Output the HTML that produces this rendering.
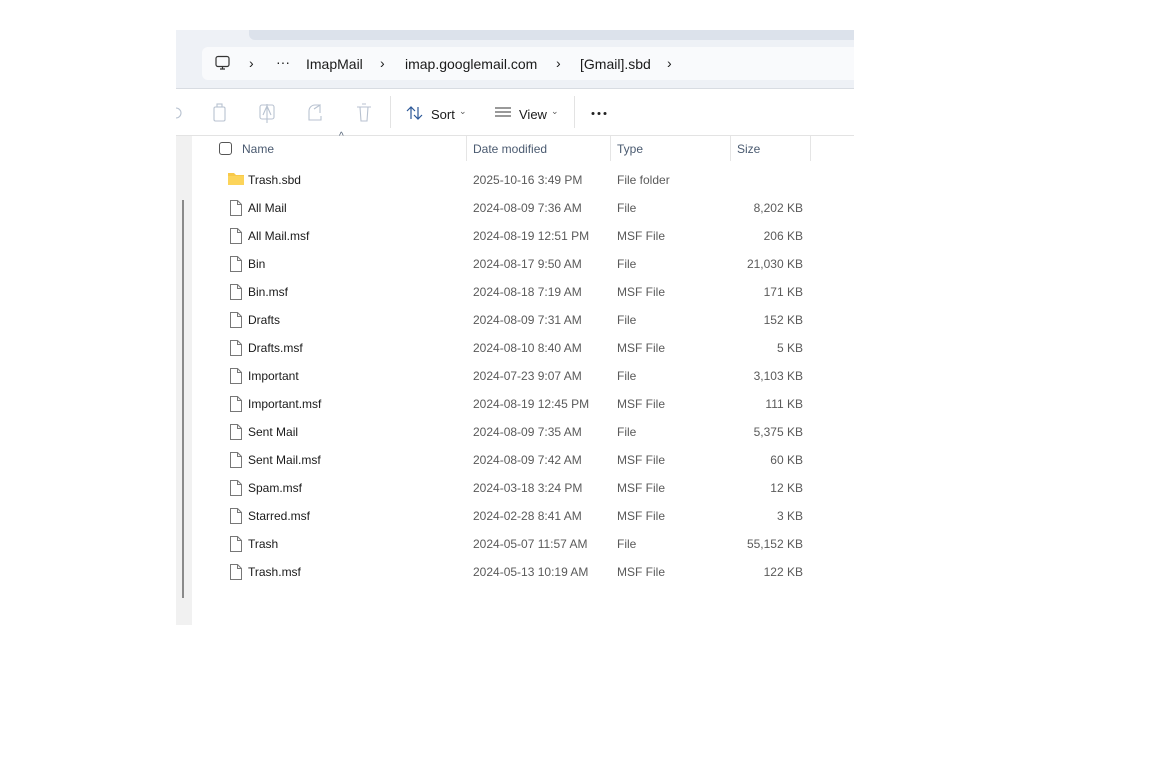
<!DOCTYPE html>
<html><head><style>
*{margin:0;padding:0;box-sizing:border-box}
body{width:1152px;height:758px;background:#fff;font-family:"Liberation Sans",sans-serif;position:relative;overflow:hidden;color:#1a1a1a}
.a{position:absolute}
.t{font-size:12px;white-space:nowrap}
.h{font-size:12px;color:#4a5a70}
.g{color:#5a5a5a}
</style></head><body>
<div class="a" style="left:176px;top:30px;width:678px;height:58px;background:#eef1f6"></div>
<div class="a" style="left:249px;top:30px;width:605px;height:10px;background:#dce2eb;border-radius:0 0 0 6px"></div>
<div class="a" style="left:202px;top:47px;width:652px;height:33px;background:#f9fafc;border-radius:6px 0 0 6px"></div>
<div class="a" style="left:176px;top:88px;width:678px;height:1px;background:#d8dce2"></div>
<div class="a" style="left:176px;top:135px;width:678px;height:1px;background:#e3e3e3"></div>
<div class="a" style="left:176px;top:136px;width:16px;height:489px;background:#f1f1f1"></div>
<div class="a" style="left:182px;top:200px;width:2px;height:398px;background:#8a8a8a"></div>
<svg class="a" style="left:214px;top:55px" width="18" height="17" viewBox="0 0 18 17"><rect x="2" y="1.5" width="13" height="10" rx="2" fill="none" stroke="#333" stroke-width="1.2"/><path d="M6 14h5M8.5 11.5v2.5" stroke="#333" stroke-width="1.2"/></svg>
<div class="a t" style="left:249px;top:55px;font-size:14px">›</div>
<div class="a t" style="left:276px;top:54px;font-size:14px">···</div>
<div class="a t" style="left:306px;top:56px;font-size:14px">ImapMail</div>
<div class="a t" style="left:380px;top:55px;font-size:14px">›</div>
<div class="a t" style="left:405px;top:56px;font-size:14px">imap.googlemail.com</div>
<div class="a t" style="left:556px;top:55px;font-size:14px">›</div>
<div class="a t" style="left:580px;top:56px;font-size:14px">[Gmail].sbd</div>
<div class="a t" style="left:667px;top:55px;font-size:14px">›</div>
<svg class="a" style="left:176px;top:100px" width="210" height="26" viewBox="0 0 210 26" fill="none" stroke="#b8c2d0" stroke-width="1.1">
<path d="M0 8a5 5 0 0 1 0 10"/>
<rect x="38" y="7" width="11" height="14" rx="1.5"/><rect x="41" y="4" width="5" height="3"/>
<rect x="84" y="5" width="14" height="14" rx="2"/><path d="M91 4v19M87 15l4-9 4 9"/>
<path d="M138 9l6-4v8M144 5h-5a6 6 0 0 0-6 6v2M133 11v9h12v-4"/>
<path d="M181 7h14M184 7l1 14h6l1-14M186 4h4"/>
</svg>
<div class="a" style="left:390px;top:96px;width:1px;height:32px;background:#e3e3e3"></div>
<div class="a" style="left:574px;top:96px;width:1px;height:32px;background:#e3e3e3"></div>
<svg class="a" style="left:406px;top:105px" width="18" height="16" viewBox="0 0 18 16" fill="none" stroke="#2b5797" stroke-width="1.2"><path d="M5 14V2M1 6l4-4 4 4M12 2v12M8 10l4 4 4-4"/></svg>
<div class="a t" style="left:431px;top:107px;font-size:13px">Sort</div>
<div class="a t g" style="left:459px;top:106px;font-size:9px">⌄</div>
<svg class="a" style="left:494px;top:106px" width="18" height="12"><path d="M1 2h16M1 6h16M1 10h16" stroke="#333" stroke-width="1.1"/></svg>
<div class="a t" style="left:519px;top:107px;font-size:13px">View</div>
<div class="a t g" style="left:551px;top:106px;font-size:9px">⌄</div>
<svg class="a" style="left:590px;top:111px" width="20" height="5"><circle cx="3" cy="2.5" r="1.5" fill="#222"/><circle cx="9" cy="2.5" r="1.5" fill="#222"/><circle cx="15" cy="2.5" r="1.5" fill="#222"/></svg>
<div class="a" style="left:219px;top:142px;width:13px;height:13px;border:1px solid #555;border-radius:3px"></div>
<div class="a h" style="left:242px;top:142px">Name</div>
<div class="a h" style="left:339px;top:131px;font-size:10px">^</div>
<div class="a" style="left:466px;top:136px;width:1px;height:25px;background:#e5e5e5"></div>
<div class="a h" style="left:473px;top:142px">Date modified</div>
<div class="a" style="left:610px;top:136px;width:1px;height:25px;background:#e5e5e5"></div>
<div class="a h" style="left:617px;top:142px">Type</div>
<div class="a" style="left:730px;top:136px;width:1px;height:25px;background:#e5e5e5"></div>
<div class="a h" style="left:737px;top:142px">Size</div>
<div class="a" style="left:810px;top:136px;width:1px;height:25px;background:#e5e5e5"></div>
<div id="rows"></div>
<svg class="a" style="left:227px;top:171px" width="18" height="15"><path d="M1 2h6l2 2h8v10H1z" fill="#f8c94a"/><path d="M1 5h16v9H1z" fill="#fcd45a"/></svg>
<div class="a t" style="left:248px;top:173px">Trash.sbd</div>
<div class="a t g" style="left:473px;top:173px">2025-10-16 3:49 PM</div>
<div class="a t g" style="left:617px;top:173px">File folder</div>
<script>
var d=[["All Mail","2024-08-09 7:36 AM","File","8,202 KB"],["All Mail.msf","2024-08-19 12:51 PM","MSF File","206 KB"],["Bin","2024-08-17 9:50 AM","File","21,030 KB"],["Bin.msf","2024-08-18 7:19 AM","MSF File","171 KB"],["Drafts","2024-08-09 7:31 AM","File","152 KB"],["Drafts.msf","2024-08-10 8:40 AM","MSF File","5 KB"],["Important","2024-07-23 9:07 AM","File","3,103 KB"],["Important.msf","2024-08-19 12:45 PM","MSF File","111 KB"],["Sent Mail","2024-08-09 7:35 AM","File","5,375 KB"],["Sent Mail.msf","2024-08-09 7:42 AM","MSF File","60 KB"],["Spam.msf","2024-03-18 3:24 PM","MSF File","12 KB"],["Starred.msf","2024-02-28 8:41 AM","MSF File","3 KB"],["Trash","2024-05-07 11:57 AM","File","55,152 KB"],["Trash.msf","2024-05-13 10:19 AM","MSF File","122 KB"]];
var h="";d.forEach(function(r,i){var y=201+i*28;
h+='<svg class="a" style="left:229px;top:'+(y-2)+'px" width="14" height="18"><path d="M1.5 1.5h7l4 4v11h-11z" fill="#fff" stroke="#777"/><path d="M8.5 1.5v4h4" fill="none" stroke="#777"/></svg>';
h+='<div class="a t" style="left:248px;top:'+y+'px">'+r[0]+'</div><div class="a t g" style="left:473px;top:'+y+'px">'+r[1]+'</div><div class="a t g" style="left:617px;top:'+y+'px">'+r[2]+'</div><div class="a t g" style="right:349px;top:'+y+'px">'+r[3]+'</div>';});
document.getElementById("rows").innerHTML=h;
</script>
</body></html>
